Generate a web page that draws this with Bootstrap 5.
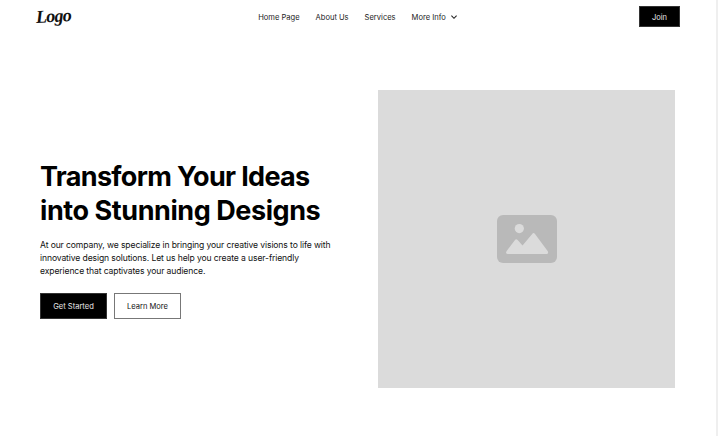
<!DOCTYPE html>
<html lang="en">
<head>
<meta charset="utf-8">
<meta name="viewport" content="width=device-width, initial-scale=1">
<title>Transform Your Ideas</title>
<link href="https://cdn.jsdelivr.net/npm/bootstrap@5.3.0/dist/css/bootstrap.min.css" rel="stylesheet">
<style>
body{font-family:Inter,"Liberation Sans",sans-serif;height:436px;overflow:hidden;color:#000;background:#fff;border-right:2px solid #efefef}
.site-nav{height:33px;padding:0 36px}
.side{width:180px}
.brand{font:italic 700 18px/20px "Liberation Serif",cursive;letter-spacing:-.8px;color:#111;text-decoration:none;transform:translateY(-1px) rotate(-3deg)}
.menu{gap:16px;font-size:7.55px;line-height:12px;padding-top:2px}
.menu a{color:#222;text-decoration:none;white-space:nowrap}
.sq{--bs-btn-border-radius:0;--bs-btn-font-size:7.55px;--bs-btn-padding-x:0;--bs-btn-padding-y:0;line-height:1;display:inline-flex;align-items:center;justify-content:center;height:26px;width:67px;padding-top:2px}
.sq-dark{--bs-btn-bg:#000;--bs-btn-color:#e8e8e8;--bs-btn-border-color:#333}
.sq-light{--bs-btn-color:#111;--bs-btn-border-color:#777}
.join{width:41px;height:21px}
.hero{padding:57px 41px 0 40px}
.copy{width:338px;padding-top:1px}
.actions{gap:7px}
h1{font-size:27px;line-height:34px;font-weight:700;letter-spacing:-.43px;padding-top:1px;margin-bottom:11px;white-space:nowrap}
h1 .first-line{letter-spacing:-.67px}
.intro{font-size:8.6px;line-height:13px;letter-spacing:-.12px;color:#111;margin-bottom:15px;white-space:nowrap}
.photo{width:297px;height:297.5px;background:#dbdbdb}
</style>
<script src="https://cdn.jsdelivr.net/npm/bootstrap@5.3.0/dist/js/bootstrap.bundle.min.js"></script>
</head>
<body>
<nav class="site-nav d-flex align-items-center justify-content-between">
  <div class="side"><a class="brand d-inline-block" href="#">Logo</a></div>
  <div class="menu d-flex align-items-center">
    <a href="#">Home Page</a><a href="#">About Us</a><a href="#">Services</a>
    <a href="#" class="d-flex align-items-center">More Info
      <svg class="ms-1" width="8" height="8" viewBox="0 0 8 8" fill="none" stroke="#222" stroke-width="1.1"><path d="M1.4 1.7 4 4.3 6.6 1.7"/></svg></a>
  </div>
  <div class="side d-flex justify-content-end"><a class="btn sq sq-dark join" href="#">Join</a></div>
</nav>
<main class="hero d-flex">
  <section class="copy d-flex flex-column justify-content-center">
    <h1><span class="first-line">Transform Your Ideas</span><br>into Stunning Designs</h1>
    <p class="intro">At our company, we specialize in bringing your creative visions to life with<br>innovative design solutions. Let us help you create a user-friendly<br>experience that captivates your audience.</p>
    <div class="d-flex actions"><a class="btn sq sq-dark" href="#">Get Started</a><a class="btn sq sq-light" href="#">Learn More</a></div>
  </section>
  <div class="photo d-flex align-items-center justify-content-center">
    <svg width="60" height="48" viewBox="0 0 60 48"><rect width="60" height="48" rx="6" fill="#b9b9b9"/><g fill="#dbdbdb"><circle cx="22.3" cy="13.6" r="4.6"/><path d="M9.5 36.2 18 25Q19.2 23.3 20.6 25L25.5 30.5 35.2 19Q36.5 17.2 38 19L50.8 36.2Q51.8 39 49.5 39H10.5Q8.2 39 9.5 36.2Z"/></g></svg>
  </div>
</main>
</body>
</html>
